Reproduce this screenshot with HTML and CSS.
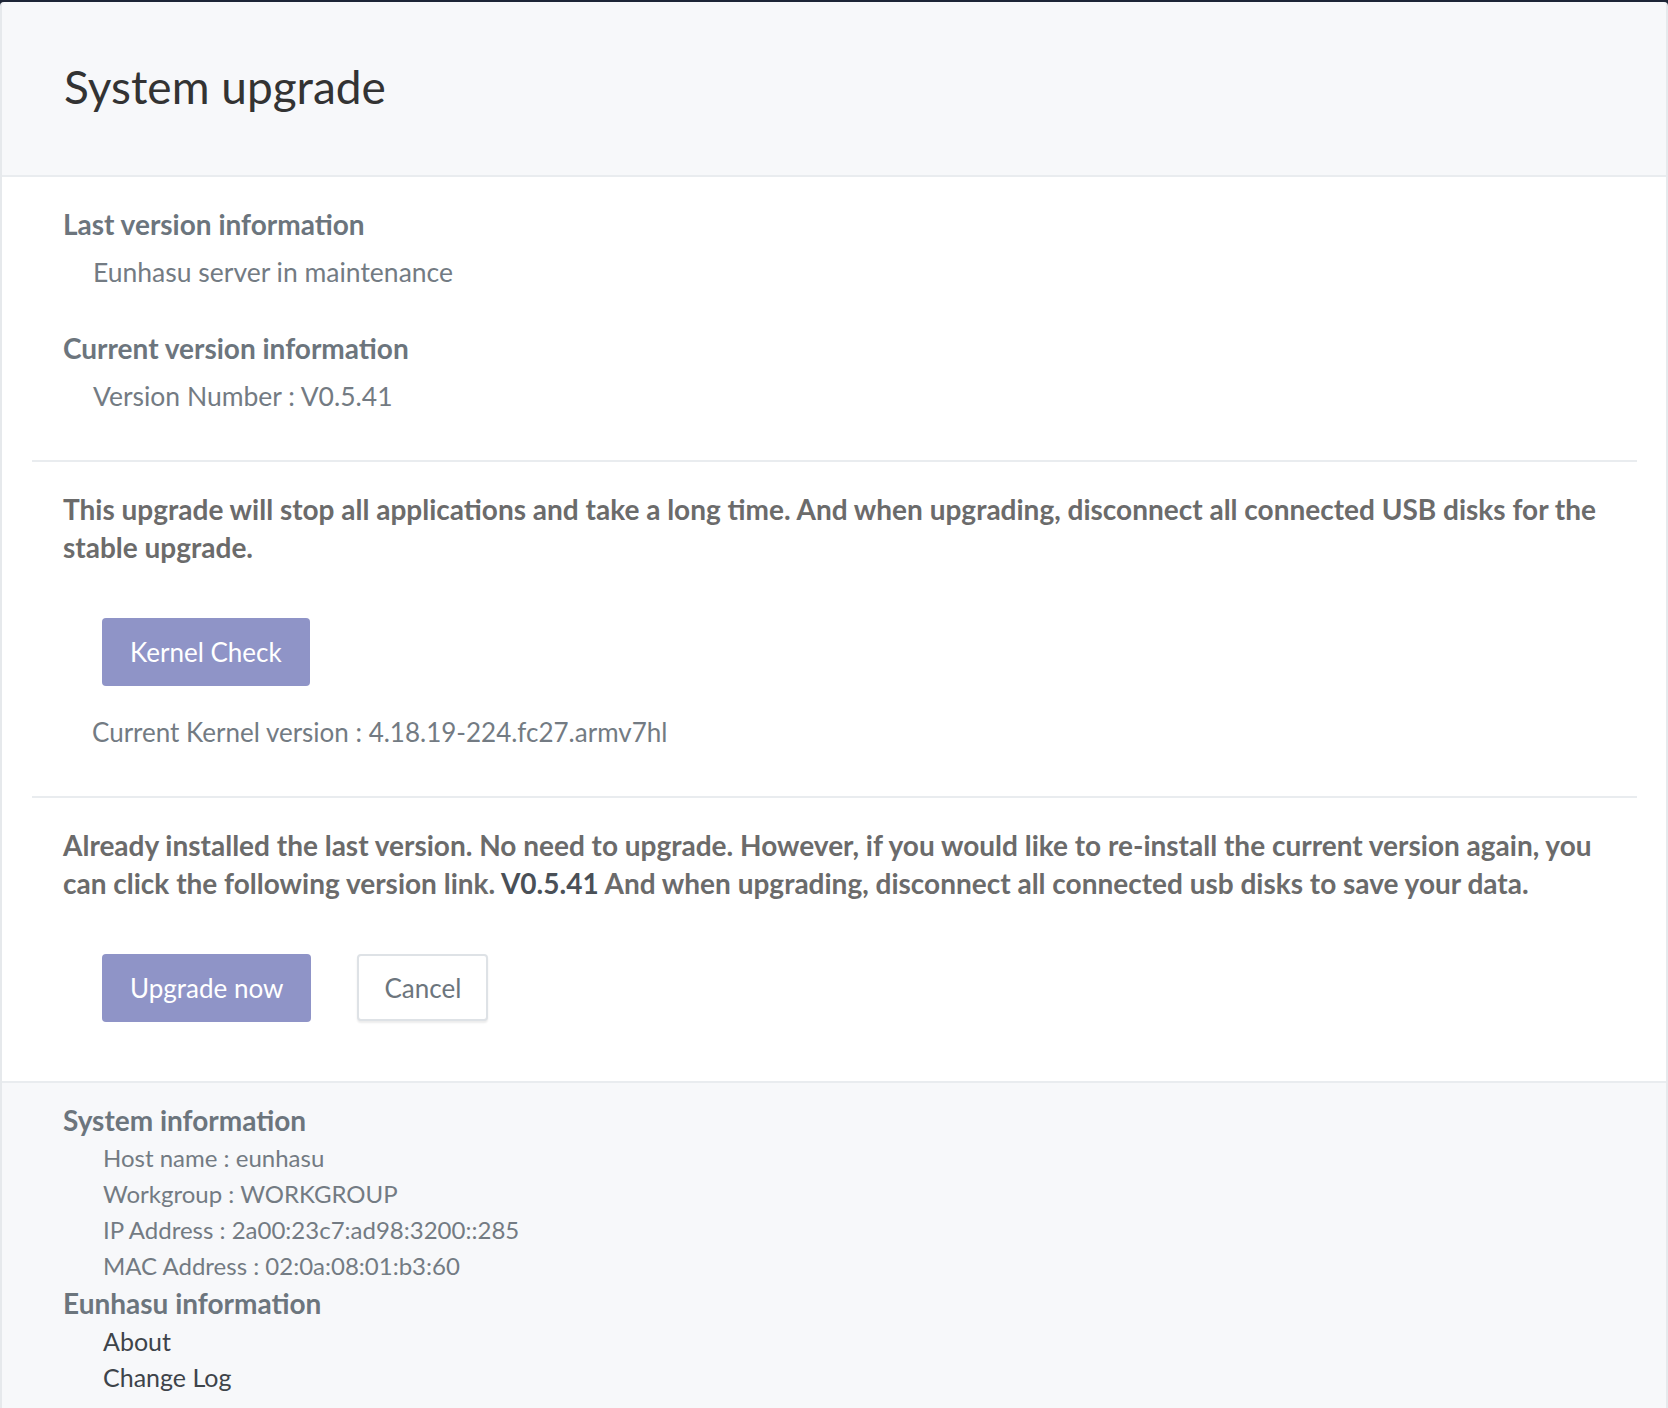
FILE: index.html
```html
<!DOCTYPE html>
<html lang="en">
<head>
    <meta charset="UTF-8">
    <meta name="viewport" content="width=device-width, initial-scale=1.0">
    <title>System upgrade</title>
    <link rel="stylesheet" href="styles.css">
</head>
<body>

    <div class="upgrade-card">
        <div class="card-header">
            <h1>System upgrade</h1>
        </div>

        <div class="card-body">
            <div class="card-section">
                <div class="info-block">
                    <h2>Last version information</h2>
                    <p>Eunhasu server in maintenance</p>
                </div>
                <div class="info-block">
                    <h2>Current version information</h2>
                    <p>Version Number : V0.5.41</p>
                </div>
            </div>

            <div class="card-section">
                <p class="notice">This upgrade will stop all applications and take a long time. And when upgrading, disconnect all connected USB disks for the stable upgrade.</p>
                <div class="button-row">
                    <button class="btn btn-primary">Kernel Check</button>
                </div>
                <p class="kernel-info">Current Kernel version : 4.18.19-224.fc27.armv7hl</p>
            </div>

            <div class="card-section">
                <p class="notice">Already installed the last version. No need to upgrade. However, if you would like to re-install the current version again, you can click the following version link. <a href="#" class="version-link">V0.5.41</a> And when upgrading, disconnect all connected usb disks to save your data.</p>
                <div class="button-row">
                    <button class="btn btn-primary">Upgrade now</button>
                    <button class="btn btn-light">Cancel</button>
                </div>
            </div>
        </div>

        <div class="card-footer">
            <h3>System information</h3>
            <ul>
                <li>Host name : eunhasu</li>
                <li>Workgroup : WORKGROUP</li>
                <li>IP Address : 2a00:23c7:ad98:3200::285</li>
                <li>MAC Address : 02:0a:08:01:b3:60</li>
            </ul>
            <h3>Eunhasu information</h3>
            <ul class="links">
                <li><a href="#">About</a></li>
                <li><a href="#">Change Log</a></li>
            </ul>
        </div>
    </div>

</body>
</html>
```

FILE: styles.css
```css
body {
    font-family: Lato, "Noto Sans", sans-serif;
    background-color: #1d2536;
    margin: 0;
    padding-top: 2px;
    height: 1406px;
    overflow: hidden;
}

.upgrade-card {
    border-left: 2px solid #e6e9ec;
    border-right: 2px solid #e6e9ec;
    border-radius: 4px 4px 0 0;
    min-height: 1406px;
    background-color: #f7f8fa;
}

.card-header {
    background-color: #f7f8fa;
    height: 173px;
    border-bottom: 2px solid #e9ecef;
    display: flex;
    align-items: center;
    padding-left: 61px;
    border-radius: 4px 4px 0 0;
}

.card-header h1 {
    margin: 0 0 4px 1px;
    font-size: 46px;
    font-weight: 400;
    color: #333;
}

.card-body {
    background-color: white;
    padding: 0 29px 0 30px;
    border-bottom: 2px solid #e9ecef;
}

.card-section {
    padding: 29px 31px 46px 31px;
    border-bottom: 2px solid #e9ecef;
}

.card-section:last-child {
    border-bottom: none;
    padding-bottom: 59px;
}

.card-section p {
    margin: 0;
    font-size: 26.5px;
    line-height: 36px;
    color: #737b83;
}

.info-block h2 {
    margin: 0;
    font-size: 28px;
    line-height: 36px;
    font-weight: 700;
    color: #6c757d;
}

.info-block p {
    margin: 12px 0 0 30px;
}

.info-block + .info-block {
    margin-top: 40px;
}

.card-section p.notice {
    font-size: 28px;
    font-weight: 700;
    line-height: 37.5px;
    color: #6b6b6b;
}

.version-link {
    color: #4a5057;
    text-decoration: none;
}

.button-row {
    display: flex;
    gap: 46px;
    margin: 52px 0 0 39px;
}

.btn {
    font-family: inherit;
    font-size: 26px;
    height: 68px;
    padding: 0 28px;
    border-radius: 4px;
    cursor: pointer;
}

.btn-primary {
    background-color: #8f94c7;
    color: white;
    border: none;
}

.btn-light {
    background-color: white;
    color: #6c757d;
    border: 2px solid #dee2e6;
    height: 67px;
    padding: 0 25px;
    box-shadow: 0 2px 2px rgba(0, 0, 0, 0.08);
}

.card-section p.kernel-info {
    font-size: 26px;
    margin: 28px 0 0 29px;
}

.card-footer {
    background-color: #f7f8fa;
    padding: 19px 0 20px 61px;
}

.card-footer h3 {
    margin: 0;
    font-size: 28px;
    line-height: 36px;
    font-weight: 700;
    color: #6c757d;
}

.card-footer ul {
    list-style: none;
    margin: 0;
    padding: 2px 0 1px 40px;
}

.card-footer li {
    font-size: 24px;
    line-height: 36px;
    color: #737b83;
}

.card-footer .links li {
    font-size: 25px;
}

.card-footer .links a {
    color: #3e444a;
    text-decoration: none;
}
```
